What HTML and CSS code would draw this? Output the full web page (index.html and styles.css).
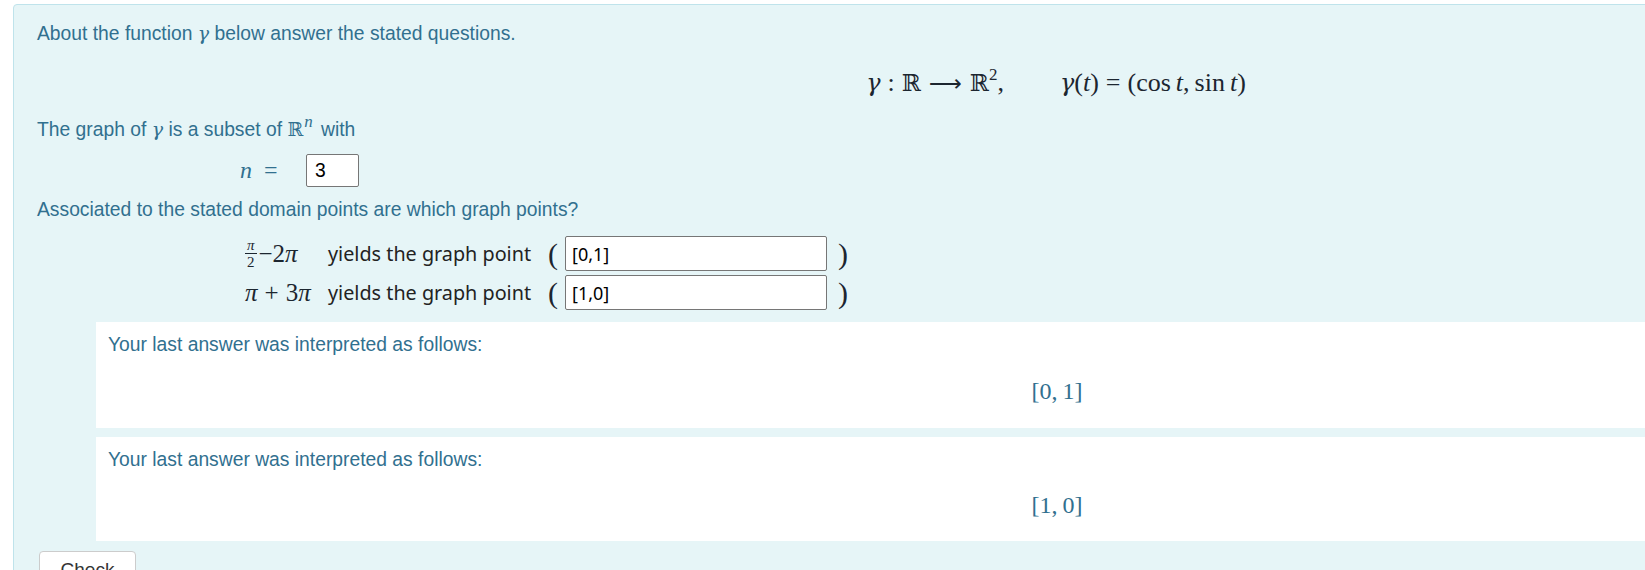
FILE: index.html
```html
<!DOCTYPE html>
<html lang="en">
<head>
<meta charset="utf-8">
<title>Question</title>
<link rel="stylesheet" href="styles.css">
</head>
<body>
<div class="page">
  <div class="panel">
    <p class="p1">About the function <span class="mi g">γ</span> below answer the stated questions.</p>
    <div class="display">
      <span class="mi g">γ</span><span class="op">:</span><span class="bb">ℝ</span><span class="op arrow">⟶</span><span class="bb">ℝ</span><sup class="sup">2</sup>,<span class="quad"></span><span class="mi g">γ</span>(<span class="mi">t</span>)<span class="op">=</span>(cos<span class="thin"></span><span class="mi">t</span>,<span class="thin"></span>sin<span class="thin"></span><span class="mi">t</span>)
    </div>
    <p class="p2">The graph of <span class="mi g">γ</span> is a subset of <span class="bbi">ℝ</span><sup class="supn">n</sup> with</p>
    <div class="nrow">
      <span class="nlabel"><span class="mi">n</span><span class="op">=</span></span>
      <input class="nbox" type="text" value="3">
    </div>
    <p class="p3">Associated to the stated domain points are which graph points?</p>
    <div class="pts">
      <span class="lbl"><span class="frac"><span class="num">π</span><span class="den">2</span></span>−2<span class="mi">π</span></span>
      <span class="yields">yields the graph point</span>
      <span class="paren">(</span>
      <input class="ptbox" type="text" value="[0,1]">
      <span class="paren">)</span>
      <span class="lbl"><span class="mi">π</span><span class="op">+</span>3<span class="mi">π</span></span>
      <span class="yields">yields the graph point</span>
      <span class="paren">(</span>
      <input class="ptbox" type="text" value="[1,0]">
      <span class="paren">)</span>
    </div>
    <div class="fb">
      <p class="fbtext">Your last answer was interpreted as follows:</p>
      <div class="fbmath">[0,<span class="thin"></span>1]</div>
    </div>
    <div class="fb">
      <p class="fbtext">Your last answer was interpreted as follows:</p>
      <div class="fbmath">[1,<span class="thin"></span>0]</div>
    </div>
    <button class="check" type="button">Check</button>
  </div>
</div>
</body>
</html>
```

FILE: styles.css
```css
html, body {
  margin: 0;
  padding: 0;
  overflow: hidden;
  background: #ffffff;
}

.page {
  padding: 4px 0 0 13px;
  width: 2200px;
}

.panel {
  width: 2038px;
  background: #e6f5f7;
  border: 1px solid #bfe3eb;
  border-radius: 4px;
  padding: 16px 23px 40px 23px;
  font-family: "Liberation Sans", Arial, sans-serif;
  font-size: 19.3px;
  color: #31708f;
}

p {
  margin: 0;
  line-height: 24px;
}

.mi {
  font-family: "Liberation Serif", "DejaVu Serif", serif;
  font-style: italic;
}

.mi.g {
  font-family: "DejaVu Serif", serif;
  font-size: 0.92em;
}

.p1 .mi, .p2 .mi {
  font-size: 19px;
}

.bbi {
  font-family: "DejaVu Serif", serif;
  font-size: 19px;
}

.supn {
  font-family: "Liberation Serif", serif;
  font-style: italic;
  font-size: 17px;
  vertical-align: 9px;
  line-height: 0;
  padding-left: 1px;
  padding-right: 3px;
}

.display {
  margin-top: 22px;
  height: 30px;
  line-height: 30px;
  text-align: center;
  font-family: "Liberation Serif", "DejaVu Serif", serif;
  font-size: 26px;
  color: #1c2630;
}

.display .bb {
  font-family: "DejaVu Serif", serif;
  font-size: 23px;
}

.op {
  padding: 0 7px;
}

.arrow {
  font-family: "DejaVu Sans", sans-serif;
  font-size: 23px;
  padding: 0 8px;
}

.sup {
  font-size: 17px;
  vertical-align: 11px;
  line-height: 0;
}

.quad {
  display: inline-block;
  width: 56px;
}

.thin {
  display: inline-block;
  width: 5px;
}

.p2 {
  margin-top: 19px;
}

.nrow {
  margin-top: 12px;
  display: flex;
  align-items: center;
  height: 33px;
  padding-left: 203px;
}

.nlabel {
  width: 66px;
  font-family: "Liberation Serif", serif;
  font-size: 24px;
  color: #31708f;
}

.nlabel .op {
  padding: 0 0 0 12px;
}

.nbox {
  box-sizing: border-box;
  width: 53px;
  height: 33px;
  border: 1px solid #767676;
  border-radius: 2px;
  background: #fff;
  padding: 0 8px;
  font-family: "Liberation Sans", Arial, sans-serif;
  font-size: 19.3px;
  color: #000;
  margin: 0;
}

.p3 {
  margin-top: 11px;
}

.pts {
  margin-top: 14px;
  margin-left: 208px;
  display: grid;
  grid-template-columns: 83px 220px 17px 262px auto;
  grid-auto-rows: 35px;
  row-gap: 4px;
  align-items: center;
}

.lbl {
  font-family: "Liberation Serif", "DejaVu Serif", serif;
  font-size: 25px;
  color: #1c2630;
  display: flex;
  align-items: center;
  white-space: nowrap;
}

.lbl .op {
  padding: 0 7px;
}

.frac {
  display: inline-flex;
  flex-direction: column;
  align-items: center;
  font-size: 15px;
  line-height: 14px;
  margin-right: 2px;
}

.frac .num {
  font-style: italic;
  padding: 0 1px 1px;
}

.frac .den {
  border-top: 1px solid #1c2630;
  padding: 1px 2px 0;
}

.yields {
  font-family: "Noto Sans", "Open Sans", sans-serif;
  font-size: 19.8px;
  color: #222;
  white-space: nowrap;
}

.paren {
  font-family: "Liberation Serif", serif;
  font-size: 30px;
  color: #1c2630;
  line-height: 35px;
}

.ptbox {
  box-sizing: border-box;
  width: 262px;
  height: 35px;
  border: 1px solid #767676;
  border-radius: 2px;
  background: #fff;
  padding: 0 6px;
  font-family: "Noto Sans", "Open Sans", sans-serif;
  font-size: 18px;
  color: #000;
  margin: 0;
}

.pts .ptbox + .paren {
  padding-left: 11px;
}

.fb {
  margin: 12px 59px 0 59px;
  height: 106px;
  background: #ffffff;
  box-sizing: border-box;
  padding: 11px 10px 0 12px;
}

.fb + .fb {
  margin-top: 9px;
  height: 104px;
}

.fbmath {
  margin-top: 19px;
  line-height: 30px;
  text-align: center;
  font-family: "Liberation Serif", "DejaVu Serif", serif;
  font-size: 24px;
  color: #31708f;
}

.fb + .fb .fbmath {
  margin-top: 18px;
}

.check {
  display: block;
  margin: 10px 0 0 2px;
  width: 97px;
  height: 38px;
  background: #fff;
  border: 1px solid #cccccc;
  border-radius: 4px;
  font-family: "Liberation Sans", Arial, sans-serif;
  font-size: 19px;
  color: #333;
  padding: 6px 12px;
}
```
